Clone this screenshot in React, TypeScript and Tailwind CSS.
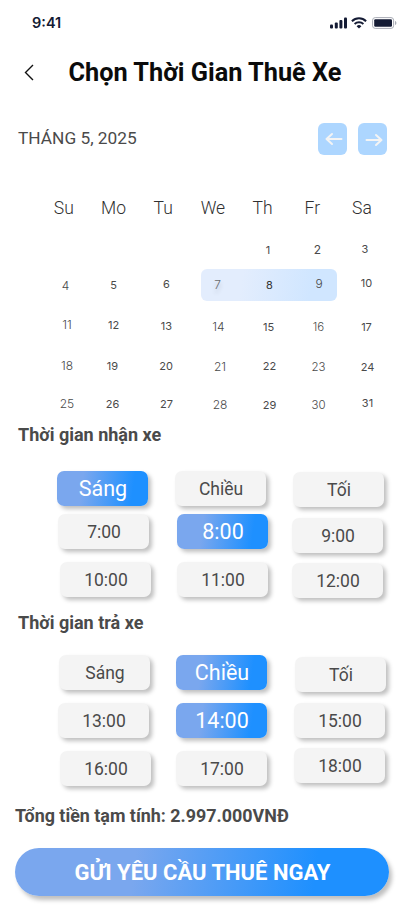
type Day = { n: number; cls: string };

const weekdays = ["Su", "Mo", "Tu", "We", "Th", "Fr", "Sa"];

const weeks: { height: string; days: Day[] }[] = [
  {
    height: "h-9",
    days: [
      { n: 1, cls: "col-start-5 pt-[5px] pr-[2px]" },
      { n: 2, cls: "col-start-6 pt-[5px] pr-[2px] text-[12px]" },
      { n: 3, cls: "col-start-7 pt-1 pr-[4px]" },
    ],
  },
  {
    height: "h-10",
    days: [
      { n: 4, cls: "pt-[5px] pr-[3px] text-[12px] font-light" },
      { n: 5, cls: "pt-[4px] pl-[1px]" },
      { n: 6, cls: "pt-[3px] pl-[1px]" },
      { n: 7, cls: "pt-[4px] pr-[3px] text-[12px] font-light opacity-80 [text-shadow:0_4px_4px_rgba(0,0,0,0.25)]" },
      { n: 8, cls: "pt-[4px] pl-[1px] text-[#333]" },
      { n: 9, cls: "pt-[3px] pl-[1px] text-[12px] font-light" },
      { n: 10, cls: "pt-[2px] pr-[1px]" },
    ],
  },
  {
    height: "h-10",
    days: [
      { n: 11, cls: "pt-[4px] text-[12px] font-light" },
      { n: 12, cls: "pt-[4px] pl-[1px]" },
      { n: 13, cls: "pt-[5px] pl-[1px]" },
      { n: 14, cls: "pt-[6px] pr-[1px] text-[12px] font-light" },
      { n: 15, cls: "pt-[6px] pr-[1px]" },
      { n: 16, cls: "pt-[6px] text-[11.5px] font-light" },
      { n: 17, cls: "pt-[6px] pr-[1px]" },
    ],
  },
  {
    height: "h-[39px]",
    days: [
      { n: 18, cls: "pt-[5px] text-[12px] font-light" },
      { n: 19, cls: "pt-[5px] pr-[1px]" },
      { n: 20, cls: "pt-[5px]" },
      { n: 21, cls: "pt-[6px] pl-[2px] text-[12px] font-light" },
      { n: 22, cls: "pt-[5px] pl-[1px]" },
      { n: 23, cls: "pt-[6px] text-[11.5px] font-light" },
      { n: 24, cls: "pt-[6px] pl-[1px]" },
    ],
  },
  {
    height: "h-6",
    days: [
      { n: 25, cls: "pt-[4px] text-[12px] font-light" },
      { n: 26, cls: "pt-[4px] pr-[1px]" },
      { n: 27, cls: "pt-[4px] pl-[1px]" },
      { n: 28, cls: "pt-[5px] pl-[2px] text-[12px] font-light" },
      { n: 29, cls: "pt-[5px] pl-[1px]" },
      { n: 30, cls: "pt-[5px] text-[11.5px] font-light" },
      { n: 31, cls: "pt-[3px] pl-[1px]" },
    ],
  },
];

const columnStarts = [
  "col-start-1",
  "col-start-2",
  "col-start-3",
  "col-start-4",
  "col-start-5",
  "col-start-6",
  "col-start-7",
];

type Slot = { label: string; cls: string; active?: boolean };

const pickup: Slot[][] = [
  [
    { label: "Sáng", cls: "", active: true },
    { label: "7:00", cls: "ml-px mt-2" },
    { label: "10:00", cls: "ml-[3px] mt-[13px]" },
  ],
  [
    { label: "Chiều", cls: "" },
    { label: "8:00", cls: "ml-[2px] mt-2", active: true },
    { label: "11:00", cls: "ml-[2px] mt-[13px]" },
  ],
  [
    { label: "Tối", cls: "ml-px mt-px" },
    { label: "9:00", cls: "mt-[11px]" },
    { label: "12:00", cls: "mt-[10px]" },
  ],
];

const dropoff: Slot[][] = [
  [
    { label: "Sáng", cls: "ml-[2px]" },
    { label: "13:00", cls: "ml-px mt-[13px]" },
    { label: "16:00", cls: "ml-[3px] mt-[13px]" },
  ],
  [
    { label: "Chiều", cls: "ml-px", active: true },
    { label: "14:00", cls: "ml-px mt-[13px]", active: true },
    { label: "17:00", cls: "ml-px mt-[13px]" },
  ],
  [
    { label: "Tối", cls: "ml-[3px] mt-[2px]" },
    { label: "15:00", cls: "ml-[2px] mt-[11px]" },
    { label: "18:00", cls: "ml-[2px] mt-[10px]" },
  ],
];

function SlotGrid({ columns }: { columns: Slot[][] }) {
  return (
    <div className="grid grid-cols-[118px_117px_100px] pl-[57px]">
      {columns.map((col, i) => (
        <div key={i} className="flex flex-col items-start">
          {col.map((s) => (
            <button
              key={s.label}
              className={`flex h-[35px] w-[91px] shrink-0 items-center justify-center rounded-[7px] pl-px pt-[2px] shadow-[3px_3px_4px_rgba(0,0,0,0.25)] ${
                s.active
                  ? "bg-[linear-gradient(98deg,#7aa7ee_28%,#1e90ff_82%)] text-[21.5px] text-white"
                  : "bg-[#f4f4f4] text-[17.5px] text-[#4a4a4a]"
              } ${s.cls}`}
            >
              {s.label}
            </button>
          ))}
        </div>
      ))}
    </div>
  );
}

function StatusBar() {
  return (
    <div className="flex h-[46px] items-center justify-between pl-8 pr-[15px] text-[#141b34]">
      <span className="font-['Inter',sans-serif] text-[14.5px] font-semibold leading-none">9:41</span>
      <div className="flex items-center">
        <svg width="18" height="12" viewBox="0 0 18 12" fill="currentColor">
          <rect x="0" y="7.5" width="3" height="4" rx="1" />
          <rect x="4.8" y="5.5" width="3" height="6" rx="1" />
          <rect x="9.4" y="3" width="3" height="8.5" rx="1" />
          <rect x="14" y="0.5" width="3" height="11" rx="1" />
        </svg>
        <svg className="ml-[3px]" width="16" height="12" viewBox="0 0 16 12" fill="none" stroke="currentColor">
          <path d="M0.9 4.2a10.2 10.2 0 0 1 14.2 0" strokeWidth="2" />
          <path d="M3.6 7a6.4 6.4 0 0 1 8.8 0" strokeWidth="1.9" />
          <path d="M8 11.5 5.6 9.2a3.5 3.5 0 0 1 4.8 0Z" fill="currentColor" stroke="none" />
        </svg>
        <svg className="ml-[5px]" width="25" height="12" viewBox="0 0 25 12">
          <rect x="0.6" y="0.6" width="21" height="10.8" rx="2.6" fill="none" stroke="#a9acb5" />
          <rect x="2.2" y="2.2" width="17.8" height="7.6" rx="1.2" fill="currentColor" />
          <path d="M23 4v4c.9-.3 1.4-1.1 1.4-2S23.900 4.300 23 4Z" fill="#a9acb5" />
        </svg>
      </div>
    </div>
  );
}

function Arrow({ flip }: { flip?: boolean }) {
  return (
    <button className="flex h-8 w-[29px] items-center justify-center rounded-[6px] bg-[#add6ff]">
      <svg
        className={flip ? "mb-px ml-[2px] rotate-180" : "mt-px ml-[2px]"}
        width="18"
        height="14"
        viewBox="0 0 18 14"
        fill="none"
        stroke="#f4f4f4"
        strokeWidth="2"
        strokeLinecap="round"
        strokeLinejoin="round"
      >
        <path d="M1.500 7H16.300M11 2 16.500 7 11 12" />
      </svg>
    </button>
  );
}

export default function App() {
  return (
    <main className="h-[917px] w-[412px] overflow-hidden bg-white font-['Roboto',sans-serif] text-[#4a4a4a]">
      <StatusBar />

      <header className="flex h-[52px] items-center pl-[24px]">
        <svg width="10" height="17" viewBox="0 0 10 17" fill="none" stroke="#111" strokeWidth="1.400">
          <path d="M9 1 1.500 8.500 9 16" />
        </svg>
        <h1 className="ml-[34.5px] whitespace-nowrap pt-[2px] text-[25.3px] font-bold leading-[30px] text-[#0b0b0b]">
          Chọn Thời Gian Thuê Xe
        </h1>
      </header>

      <div className="mt-[25px] flex h-8 items-center pl-[18px] pr-[25px]">
        <span className="grow text-[17.3px] leading-none">THÁNG 5, 2025</span>
        <div className="flex gap-[11px]">
          <Arrow flip />
          <Arrow />
        </div>
      </div>

      <div className="mt-[41px] grid h-6 grid-cols-[repeat(7,49.700px)] items-center pl-[39px] text-center text-[17.5px] font-light leading-6 text-[#303030]">
        {weekdays.map((d) => (
          <span key={d}>{d}</span>
        ))}
      </div>

      <div className="mt-[17px] pl-[44px] font-['Inter',sans-serif] text-[11px] leading-4">
        {weeks.map((w, i) => (
          <div
            key={i}
            className={`grid grid-cols-[46px_46px_60px_46px_54px_45px_52px] grid-rows-1 text-center ${w.height}`}
          >
            {i === 1 && (
              <div className="col-start-4 col-end-7 row-start-1 -mt-1 ml-[5px] mr-1 h-8 rounded-[6px] bg-[linear-gradient(98deg,#e3edfd_30%,#d0e6ff_80%)]" />
            )}
            {w.days.map((d, c) => (
              <span key={d.n} className={`row-start-1 ${i === 0 ? "" : columnStarts[c]} ${d.cls}`}>
                {d.n}
              </span>
            ))}
          </div>
        ))}
      </div>

      <h2 className="mt-[7px] pl-[18px] text-[18px] font-bold leading-6">Thời gian nhận xe</h2>
      <div className="mt-6 h-[140px]">
        <SlotGrid columns={pickup} />
      </div>

      <h2 className="pl-[18px] text-[18px] font-bold leading-6">Thời gian trả xe</h2>
      <div className="mt-5 h-[149px]">
        <SlotGrid columns={dropoff} />
      </div>

      <p className="pl-[15px] text-[17.9px] font-bold leading-6">Tổng tiền tạm tính: 2.997.000VNĐ</p>
      <button className="ml-[15px] mt-5 flex h-12 w-[374px] items-center justify-center rounded-full bg-[linear-gradient(97deg,#7aa7ee_32%,#1e90ff_80%)] pl-px text-[22px] font-bold text-white shadow-[3px_4px_4px_rgba(0,0,0,0.25)]">
        GỬI YÊU CẦU THUÊ NGAY
      </button>
    </main>
  );
}
